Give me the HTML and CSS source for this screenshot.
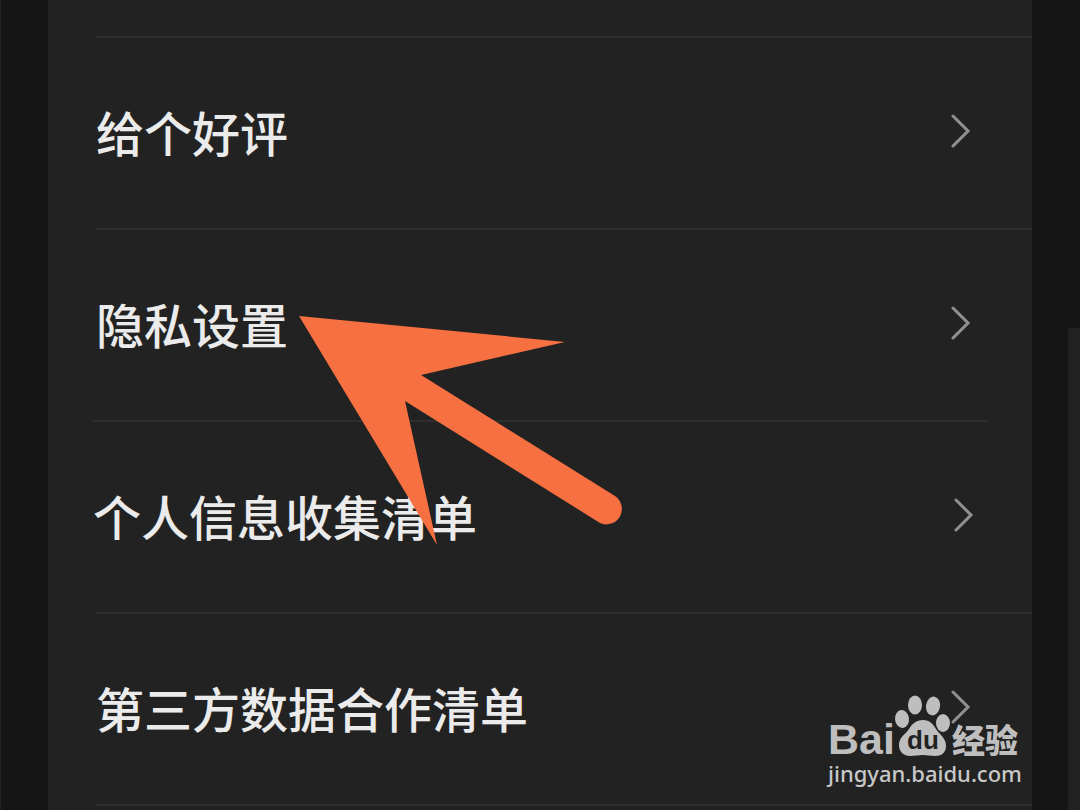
FILE: index.html
```html
<!DOCTYPE html>
<html lang="zh-CN">

<head>
    <meta charset="UTF-8">
    <meta name="viewport" content="width=device-width, initial-scale=1.0">
    <title>设置</title>
    <link rel="stylesheet" href="styles.css">
</head>

<body>

    <div class="page">
        <main class="panel">
            <ul class="menu">
                <li class="menu-item">
                    <a href="#rate">
                        <span>给个好评</span>
                        <svg class="chevron" viewBox="0 0 20 36" aria-hidden="true"><path d="M2 3l15 15L2 33"/></svg>
                    </a>
                </li>
                <li class="menu-item">
                    <a href="#privacy">
                        <span>隐私设置</span>
                        <svg class="chevron" viewBox="0 0 20 36" aria-hidden="true"><path d="M2 3l15 15L2 33"/></svg>
                    </a>
                    <svg class="pointer" viewBox="0 0 326 230" aria-hidden="true">
                        <path d="M0 0l266 26-144 33 194 121a15.500 15.500 0 0 1-15 27L106 85l32 144z"/>
                    </svg>
                </li>
                <li class="menu-item inset">
                    <a href="#collected">
                        <span>个人信息收集清单</span>
                        <svg class="chevron" viewBox="0 0 20 36" aria-hidden="true"><path d="M2 3l15 15L2 33"/></svg>
                    </a>
                </li>
                <li class="menu-item">
                    <a href="#partners">
                        <span>第三方数据合作清单</span>
                        <svg class="chevron" viewBox="0 0 20 36" aria-hidden="true"><path d="M2 3l15 15L2 33"/></svg>
                    </a>
                </li>
            </ul>
        </main>
        <div class="next-panel"></div>
    </div>

    <div class="watermark">
        <div class="logo">
            <span class="logo-bai">Bai</span>
            <svg class="paw" viewBox="66 0 58 64" aria-hidden="true">
                <ellipse cx="74" cy="24" rx="7" ry="9" transform="rotate(-6 74 24)"/>
                <ellipse cx="87" cy="10" rx="7" ry="9.500"/>
                <ellipse cx="105" cy="11" rx="7" ry="9.500" transform="rotate(10 105 11)"/>
                <ellipse cx="115" cy="28" rx="7" ry="9"/>
                <path d="M95 25c7 0 10 4 13 9 4 6 10 9 10 17 0 7-5 10-11 10-5 0-8-1-12-1s-8 1-13 1c-6 0-11-4-11-11 0-8 6-10 10-16 3-5 7-9 14-9z"/>
                <text x="79" y="54">du</text>
            </svg>
            <span class="logo-cn">经验</span>
        </div>
        <span class="site">jingyan.baidu.com</span>
    </div>

</body>

</html>
```

FILE: styles.css
```css
* {
    box-sizing: border-box;
}
body {
    margin: 0;
    background: #151515;
    color: #ebebeb;
    font-family: "Noto Sans CJK SC", sans-serif;
}
.page {
    position: relative;
    display: grid;
    grid-template-columns: 47px 1fr 36px 12px;
    min-height: 100vh;
    border-left: 1px solid #222;
}
.panel {
    grid-column: 2;
    padding-top: 36px;
    background: #222;
}
.next-panel {
    grid-column: 4;
    margin-top: 328px;
    background: #222;
}

.menu {
    list-style: none;
    margin: 0;
    padding: 0;
}
.menu-item {
    position: relative;
    margin-left: 48px;
    border-top: 2px solid #2e2e2e;
}
.menu-item:last-child {
    border-bottom: 2px solid #2e2e2e;
}
.menu-item a {
    display: flex;
    align-items: center;
    justify-content: space-between;
    height: 190px;
    padding: 0 61px 4px 0;
    color: inherit;
    font-size: 48px;
    font-weight: 500;
    line-height: 72px;
    text-decoration: none;
}
.menu-item.inset {
    margin-left: 45px;
    margin-right: 44px;
}
.menu-item.inset a {
    padding-right: 14px;
}
.chevron {
    width: 20px;
    height: 36px;
    fill: none;
    stroke: #909090;
    stroke-width: 3;
    stroke-linecap: round;
}

.pointer {
    position: absolute;
    z-index: 1;
    top: 86px;
    left: 203px;
    width: 326px;
    height: 230px;
    fill: #f77041;
}

.watermark {
    position: absolute;
    right: 58px;
    top: 695px;
    width: 194px;
    color: #c8c8c8;
    pointer-events: none;
}
.logo {
    display: flex;
    align-items: flex-end;
    height: 64px;
    color: #bebebe;
}
.logo-bai {
    width: 66px;
    font: bold 43px/40px "Liberation Sans", sans-serif;
}
.paw {
    flex: none;
    width: 58px;
    height: 64px;
    fill: #bebebe;
}
.paw text {
    font: bold 26px "Liberation Sans", sans-serif;
    fill: #222;
}
.logo-cn {
    font: 900 33px/40px "Noto Sans CJK SC", sans-serif;
    white-space: nowrap;
}
.site {
    display: block;
    font: 500 22px/28px "Noto Sans", sans-serif;
    white-space: nowrap;
}
```
